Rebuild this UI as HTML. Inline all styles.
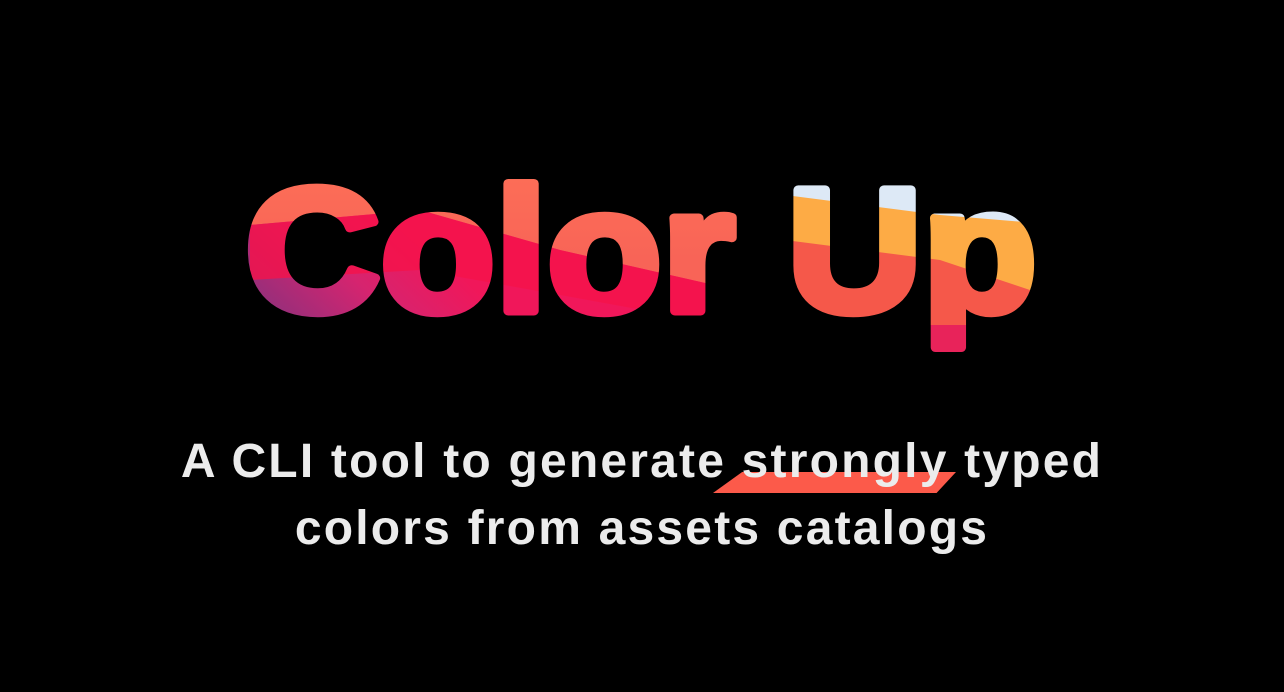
<!DOCTYPE html>
<html><head><meta charset="utf-8"><style>
html,body{margin:0;width:1284px;height:692px;background:#000;overflow:hidden}
svg{position:absolute;left:0;top:0}
.sub{position:absolute;left:0;width:1284px;top:428px;text-align:center;color:#ececec;font:bold 48px/67px "Liberation Sans",sans-serif;letter-spacing:2.2px}
.hl{position:absolute;left:713px;top:472px;width:243px;height:21px;background:#fc5a4a;clip-path:polygon(12% 0,100% 0,92% 100%,0 100%)}
</style></head><body>
<svg width="1284" height="692">
<defs>
<linearGradient id="base" gradientUnits="userSpaceOnUse" x1="400" y1="220" x2="300" y2="330">
<stop offset="0" stop-color="#f0175a"/><stop offset="0.5" stop-color="#d6246f"/><stop offset="1" stop-color="#9a2e7a"/></linearGradient>
<linearGradient id="top" gradientUnits="userSpaceOnUse" x1="0" y1="180" x2="0" y2="260">
<stop offset="0" stop-color="#fc6d57"/><stop offset="1" stop-color="#f86457"/></linearGradient>
<pattern id="p" patternUnits="userSpaceOnUse" width="1284" height="692">
<rect width="1284" height="692" fill="url(#base)"/>
<polygon points="0,0 780,0 780,300 560,250 420,210 250,225 0,240" fill="url(#top)"/>
<polygon points="250,225 420,210 560,250 780,300 780,335 560,295 420,270 250,280" fill="#f5124a" opacity="0.8"/>
<rect x="785" y="0" width="300" height="400" fill="#f5584a"/>
<polygon points="785,0 1060,0 1060,300 940,260 785,240" fill="#fdab45"/>
<polygon points="785,0 1060,0 1060,225 940,215 785,195" fill="#dde9f6"/>
<polygon points="930,325 1000,325 1000,370 930,370" fill="#e8235a"/>
</pattern>
</defs>
<text x="245" y="311" font-family="Liberation Sans" font-weight="bold" font-size="176" textLength="792" lengthAdjust="spacingAndGlyphs" fill="url(#p)" stroke="url(#p)" stroke-width="9" stroke-linejoin="round">Color Up</text>
</svg>
<div class="hl"></div>
<div class="sub">A CLI tool to generate strongly typed<br>colors from assets catalogs</div>
</body></html>
